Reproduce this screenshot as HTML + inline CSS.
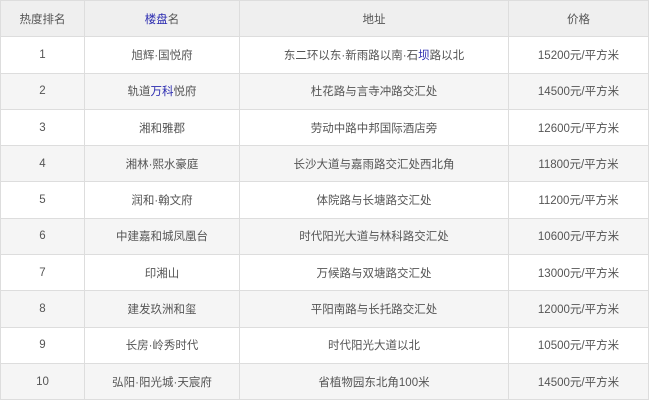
<!DOCTYPE html>
<html><head><meta charset="utf-8"><style>
html,body{margin:0;padding:0;background:#fff;width:649px;height:400px;overflow:hidden}
table{border-collapse:collapse;table-layout:fixed;width:648px;font-family:"Liberation Sans","Noto Sans CJK SC",sans-serif;font-size:11.5px;color:#555}
td{border:1px solid #ddd;text-align:center;height:35.3px;padding:0;white-space:nowrap}
tr:nth-child(odd) td{background:#f5f5f5}
tr.h td{background:#efefef}
tr:nth-child(even) td{background:#fff}
a{color:#2b2bb0;text-decoration:none}
</style></head><body>
<table>
<colgroup><col style="width:84px"><col style="width:155px"><col style="width:269px"><col style="width:140px"></colgroup>
<tr class="h"><td>热度排名</td><td><a>楼盘</a>名</td><td>地址</td><td>价格</td></tr>
<tr><td>1</td><td>旭辉·国悦府</td><td>东二环以东·新雨路以南·石<a>坝</a>路以北</td><td>15200元/平方米</td></tr>
<tr><td>2</td><td>轨道<a>万科</a>悦府</td><td>杜花路与言寺冲路交汇处</td><td>14500元/平方米</td></tr>
<tr><td>3</td><td>湘和雅郡</td><td>劳动中路中邦国际酒店旁</td><td>12600元/平方米</td></tr>
<tr><td>4</td><td>湘林·熙水豪庭</td><td>长沙大道与嘉雨路交汇处西北角</td><td>11800元/平方米</td></tr>
<tr><td>5</td><td>润和·翰文府</td><td>体院路与长塘路交汇处</td><td>11200元/平方米</td></tr>
<tr><td>6</td><td>中建嘉和城凤凰台</td><td>时代阳光大道与林科路交汇处</td><td>10600元/平方米</td></tr>
<tr><td>7</td><td>印湘山</td><td>万候路与双塘路交汇处</td><td>13000元/平方米</td></tr>
<tr><td>8</td><td>建发玖洲和玺</td><td>平阳南路与长托路交汇处</td><td>12000元/平方米</td></tr>
<tr><td>9</td><td>长房·岭秀时代</td><td>时代阳光大道以北</td><td>10500元/平方米</td></tr>
<tr><td>10</td><td>弘阳·阳光城·天宸府</td><td>省植物园东北角100米</td><td>14500元/平方米</td></tr>
</table>
</body></html>
